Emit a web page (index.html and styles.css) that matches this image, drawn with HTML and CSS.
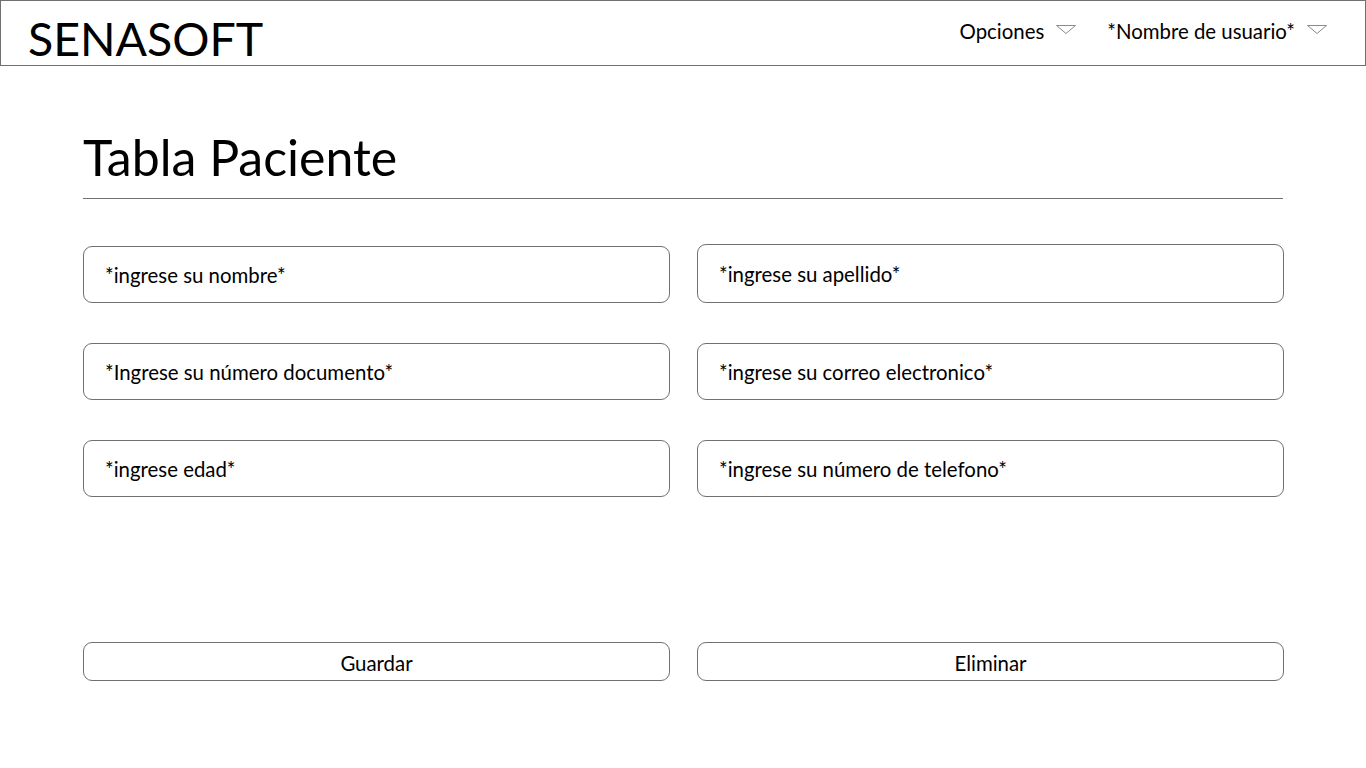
FILE: index.html
```html
<!DOCTYPE html>
<html lang="es">
<head>
<meta charset="utf-8">
<title>SENASOFT - Tabla Paciente</title>
<link rel="stylesheet" href="styles.css">
</head>
<body>
<header class="topbar">
  <div class="brand">SENASOFT</div>
  <nav class="menu">
    <div class="menu-item">
      <span>Opciones</span>
      <svg class="caret" width="20" height="10" viewBox="0 0 20 10"><polygon points="0.5,0.5 19.5,0.5 10,8.5" fill="none" stroke="#8a8a8a" stroke-width="1"/></svg>
    </div>
    <div class="menu-item">
      <span>*Nombre de usuario*</span>
      <svg class="caret" width="20" height="10" viewBox="0 0 20 10"><polygon points="0.5,0.5 19.5,0.5 10,8.5" fill="none" stroke="#8a8a8a" stroke-width="1"/></svg>
    </div>
  </nav>
</header>
<main class="content">
  <h1 class="title">Tabla Paciente</h1>
  <form class="form">
    <div class="grid">
      <div class="field">*ingrese su nombre*</div>
      <div class="field tall">*ingrese su apellido*</div>
      <div class="field">*Ingrese su número documento*</div>
      <div class="field">*ingrese su correo electronico*</div>
      <div class="field">*ingrese edad*</div>
      <div class="field">*ingrese su número de telefono*</div>
    </div>
    <div class="actions">
      <button type="button" class="btn">Guardar</button>
      <button type="button" class="btn">Eliminar</button>
    </div>
  </form>
</main>
</body>
</html>
```
FILE: styles.css
```css
* { box-sizing: border-box; }
html, body { margin: 0; padding: 0; background: #fff; }
body {
  font-family: "Lato", "Open Sans", sans-serif;
  color: #000;
  width: 1366px;
}
.topbar {
  height: 66px;
  border: 1px solid #707070;
  display: flex;
  align-items: center;
  justify-content: space-between;
  padding: 0 38px 0 27px;
}
.brand {
  font-size: 46.5px;
  line-height: 52px;
  padding-top: 11px;
  height: 64px;
}
.menu {
  display: flex;
  align-items: center;
  gap: 31px;
  padding-bottom: 4px;
}
.menu-item {
  display: flex;
  align-items: center;
  gap: 12px;
  font-size: 20.4px;
}
.caret { display: block; margin-top: -3px; }
.content {
  padding: 0 0 0 83px;
  width: 1283px;
}
.title {
  margin: 55px 0 0;
  font-weight: 400;
  font-size: 50px;
  line-height: 72px;
  height: 78px;
  border-bottom: 1px solid #707070;
}
.form { margin-top: 45px; }
.grid {
  display: grid;
  grid-template-columns: 587px 587px;
  column-gap: 27px;
  row-gap: 40px;
  align-items: end;
}
.field {
  height: 57px;
  border: 1px solid #707070;
  border-radius: 9px;
  display: flex;
  align-items: center;
  padding: 1px 21px 0;
  font-size: 20.4px;
}
.field.tall { height: 59px; }
.actions {
  margin-top: 145px;
  display: grid;
  grid-template-columns: 587px 587px;
  column-gap: 27px;
}
.btn {
  height: 39px;
  border: 1px solid #707070;
  border-radius: 9px;
  background: #fff;
  font-family: inherit;
  font-size: 20.4px;
  color: #000;
  padding: 2px 0 0;
}
```
